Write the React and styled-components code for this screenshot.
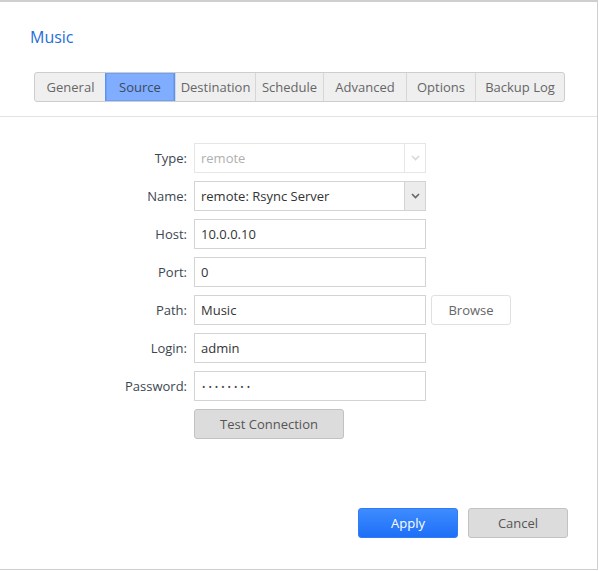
import React from 'react';
import styled, { createGlobalStyle } from 'styled-components';

const GlobalStyle = createGlobalStyle`
  html, body {
    margin: 0;
    padding: 0;
    background: #ffffff;
  }
  body {
    font-family: 'Open Sans', 'Liberation Sans', sans-serif;
    font-size: 13px;
    color: #414b55;
  }
`;

const Window = styled.div`
  box-sizing: border-box;
  width: 598px;
  height: 570px;
  border-top: 2px solid #cfcfcf;
  border-right: 1px solid #cfcfcf;
  border-bottom: 1px solid #cfcfcf;
  display: flex;
  flex-direction: column;
`;

const Header = styled.div`
  padding: 0 34px;
  border-bottom: 1px solid #e3e3e3;
  height: 115px;
  box-sizing: border-box;
`;

const Title = styled.h1`
  margin: 0 0 0 -4px;
  padding-top: 23px;
  font-size: 16px;
  font-weight: 400;
  color: #1f6fd8;
  line-height: 24px;
`;

const Tabs = styled.div`
  display: flex;
  margin-top: 23px;
  width: fit-content;
  border: 1px solid #cdcdcd;
  border-radius: 3px;
  background: #efefef;
  overflow: hidden;
`;

const Tab = styled.div`
  box-sizing: border-box;
  width: ${p => p.w}px;
  height: 28px;
  padding-bottom: 1px;
  display: flex;
  align-items: center;
  justify-content: center;
  color: ${p => (p.active ? '#3b4a5c' : '#666')};
  background: ${p => (p.active ? '#80adff' : 'transparent')};
  border-left: 1px solid ${p => (p.active ? '#5c92f0' : p.first ? 'transparent' : '#d6d6d6')};
  border-right: ${p => (p.active ? '1px solid #5c92f0' : 'none')};
  box-shadow: ${p => (p.active ? 'inset 0 0 0 1px #6ea0f8' : 'none')};
`;

const Form = styled.div`
  display: grid;
  grid-template-columns: 187px 232px auto;
  column-gap: 7px;
  row-gap: 8px;
  padding-top: 26px;
  align-items: center;
`;

const Label = styled.div`
  text-align: right;
  color: #3c4650;
`;

const Field = styled.div`
  box-sizing: border-box;
  height: 30px;
  border: 1px solid ${p => (p.disabled ? '#e6e6e6' : '#d3d3d3')};
  display: flex;
  align-items: center;
  background: #fff;
  color: ${p => (p.disabled ? '#b0b0b0' : '#333')};
  padding-left: 6px;
`;

const FieldText = styled.span`
  flex: 1;
`;

const Dots = styled.span`
  font-size: 9px;
  letter-spacing: 3px;
  color: #444;
  padding-left: 1px;
`;

const Arrow = styled.div`
  box-sizing: border-box;
  width: 21px;
  height: 100%;
  border-left: 1px solid ${p => (p.disabled ? '#e6e6e6' : '#d3d3d3')};
  background: ${p => (p.disabled ? '#fff' : '#ececec')};
  display: flex;
  align-items: center;
  justify-content: center;
`;

const Browse = styled.div`
  box-sizing: border-box;
  width: 80px;
  height: 30px;
  border: 1px solid #e0e0e0;
  border-radius: 3px;
  display: flex;
  align-items: center;
  justify-content: center;
  color: #666;
  margin-left: -2px;
`;

const Button = styled.div`
  box-sizing: border-box;
  width: ${p => p.w}px;
  height: 30px;
  border-radius: 3px;
  display: flex;
  align-items: center;
  justify-content: center;
  border: 1px solid ${p => (p.primary ? '#2f7cf6' : '#c2c2c2')};
  background: ${p => (p.primary ? 'linear-gradient(#3d8cff, #1f6ff7)' : '#dcdcdc')};
  color: ${p => (p.primary ? '#fff' : '#555')};
`;

const Footer = styled.div`
  margin-top: auto;
  display: flex;
  justify-content: flex-end;
  gap: 10px;
  padding: 0 29px 31px 0;
`;

const Chevron = ({ color }) => (
  <svg width="9" height="6" viewBox="0 0 9 6">
    <path d="M1 1l3.5 3.5L8 1" fill="none" stroke={color} strokeWidth="1.6" />
  </svg>
);

const tabs = [
  ['General', 70],
  ['Source', 70],
  ['Destination', 80],
  ['Schedule', 68],
  ['Advanced', 83],
  ['Options', 69],
  ['Backup Log', 89],
];

const rows = [
  ['Host', '10.0.0.10'],
  ['Port', '0'],
];

export default function App() {
  return (
    <>
      <GlobalStyle />
      <Window>
        <Header>
          <Title>Music</Title>
          <Tabs>
            {tabs.map(([name, w], i) => (
              <Tab key={name} w={w} first={i === 0} active={name === 'Source'}>
                {name}
              </Tab>
            ))}
          </Tabs>
        </Header>
        <Form>
          <Label>Type:</Label>
          <Field disabled>
            <FieldText>remote</FieldText>
            <Arrow disabled><Chevron color="#d8d8d8" /></Arrow>
          </Field>
          <div />
          <Label>Name:</Label>
          <Field>
            <FieldText>remote: Rsync Server</FieldText>
            <Arrow><Chevron color="#666" /></Arrow>
          </Field>
          <div />
          {rows.map(([l, v]) => (
            <React.Fragment key={l}>
              <Label>{l}:</Label>
              <Field>{v}</Field>
              <div />
            </React.Fragment>
          ))}
          <Label>Path:</Label>
          <Field>Music</Field>
          <Browse>Browse</Browse>
          <Label>Login:</Label>
          <Field>admin</Field>
          <div />
          <Label>Password:</Label>
          <Field><Dots>••••••••</Dots></Field>
          <div />
          <div />
          <Button w={150}>Test Connection</Button>
          <div />
        </Form>
        <Footer>
          <Button primary w={100}>Apply</Button>
          <Button w={100}>Cancel</Button>
        </Footer>
      </Window>
    </>
  );
}
